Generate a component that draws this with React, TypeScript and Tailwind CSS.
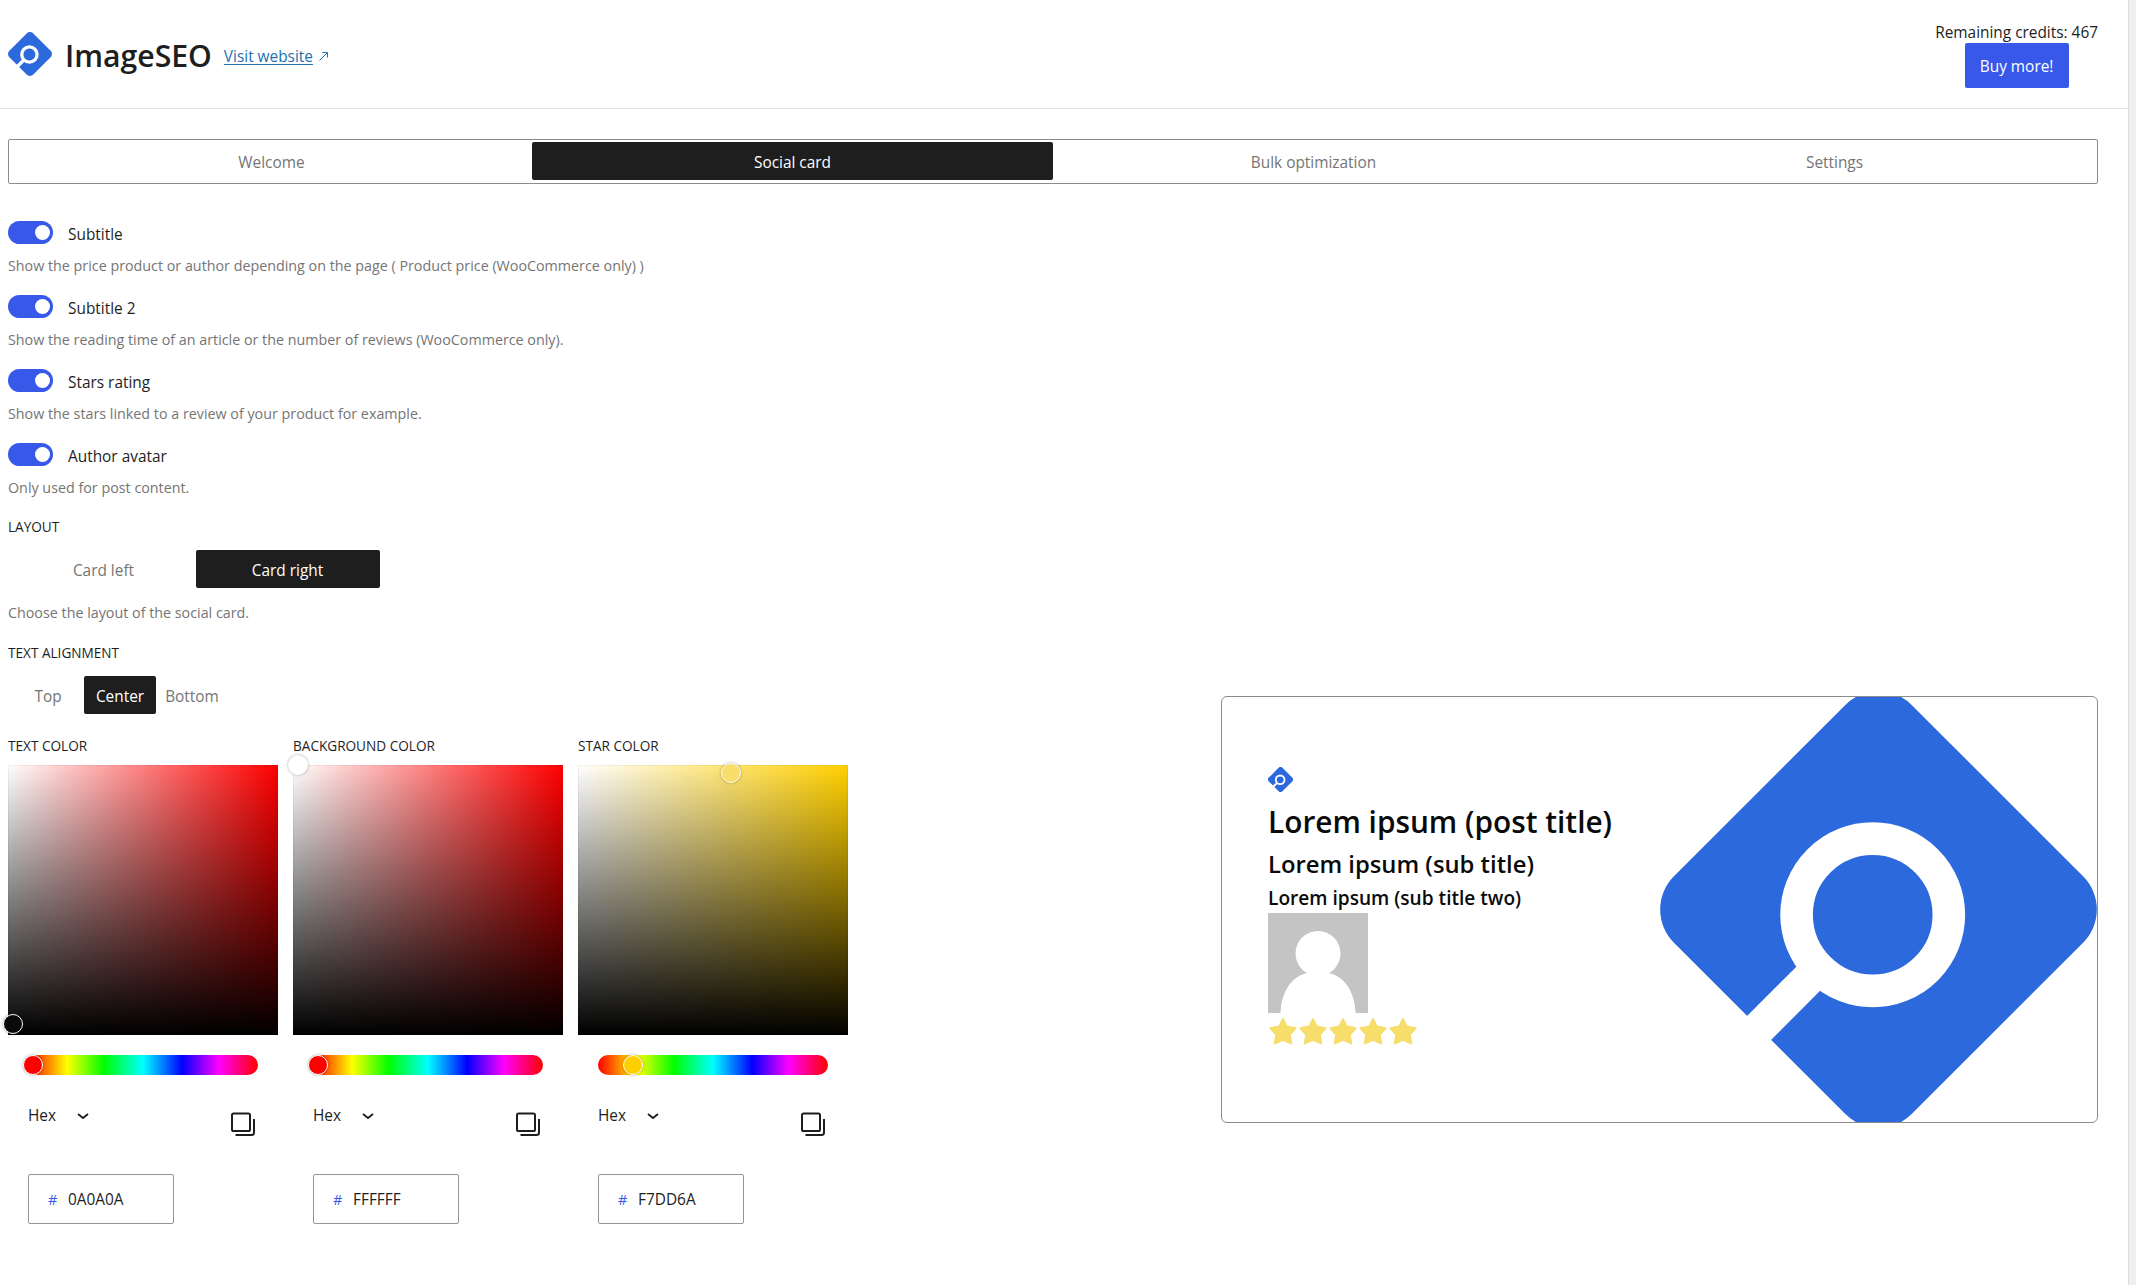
const BODY = "text-[15.4px] leading-6";

function Logo({ className }: { className: string }) {
  return (
    <svg className={className} viewBox="0 0 438 438" preserveAspectRatio="xMidYMid slice" aria-hidden="true">
      <rect x="50.5" y="50.5" width="337" height="337" rx="47" fill="#2b69dc" transform="rotate(45 219 219)" />
      <circle cx="213.2" cy="224.3" r="76.3" fill="none" stroke="#fff" strokeWidth="32.7" />
      <path d="M143 270 L78 335 L102 359 L167 294 Z" fill="#fff" />
    </svg>
  );
}

function Header() {
  return (
    <header className="flex h-[109px] items-start justify-between border-b border-[#e2e2e2] pr-[30px] pl-2">
      <div className="mt-8 flex h-11 items-center">
        <Logo className="size-11" />
        <h1 className="ml-[13px] pt-[3px] text-[30.2px] leading-10 font-semibold">ImageSEO</h1>
        <a href="#" className={`ml-3 flex items-center pt-[5px] text-[#2271b1] ${BODY}`}>
          <span className="underline decoration-1 underline-offset-2">Visit website</span>
          <svg className="ml-[6px] size-[9px]" viewBox="0 0 9 9" fill="none" stroke="currentColor" aria-hidden="true">
            <path d="M0.5 8.5 L8 1 M3.5 0.5 H8.5 V5.5" />
          </svg>
        </a>
      </div>
      <div className="mt-[21px] flex flex-col items-center">
        <span className={`-mb-[2px] ${BODY}`}>Remaining credits: 467</span>
        <button className={`h-[45px] w-[104px] rounded-[2px] bg-[#3858e9] pt-[2px] text-white ${BODY}`}>
          Buy more!
        </button>
      </div>
    </header>
  );
}

function Segment({ label, active, className }: { label: string; active?: boolean; className: string }) {
  return (
    <button
      className={`h-[38px] rounded-[2px] pt-[3px] ${BODY} ${className} ${
        active ? "bg-[#1e1e1e] text-white" : "text-[#757575]"
      }`}
    >
      {label}
    </button>
  );
}

function ToggleField({ label, help }: { label: string; help: string }) {
  return (
    <div className="h-[74px]">
      <div className="flex h-[26px] items-start gap-[15px]">
        <span className="flex h-[23px] w-[45px] items-center justify-end rounded-full bg-[#3858e9] pr-[3px]">
          <span className="size-[15px] rounded-full bg-white" />
        </span>
        <span className={`mt-[2px] ${BODY}`}>{label}</span>
      </div>
      <p className="mt-[9px] text-[14.3px] leading-5 text-[#757575]">{help}</p>
    </div>
  );
}

function Label({ children }: { children: string }) {
  return <div className="text-[13.6px] leading-5 uppercase">{children}</div>;
}

type Picker = { label: string; hue: string; hueX: number; color: string; x: number; y: number; hex: string };

const KNOB =
  "absolute size-5 -translate-x-1/2 -translate-y-1/2 rounded-full border border-white shadow-[0_0_3px_rgba(0,0,0,0.35)]";

function ColorPicker({ label, hue, hueX, color, x, y, hex }: Picker) {
  return (
    <div className="w-[270px]">
      <Label>{label}</Label>
      <div
        className="relative mt-[9px] h-[270px]"
        style={{ backgroundColor: hue }}
      >
        <div className="h-full bg-[linear-gradient(0deg,#000,transparent),linear-gradient(90deg,#fff,transparent)] shadow-[inset_0_0_0_1px_rgba(0,0,0,0.05)]" />
        <span className={KNOB} style={{ left: x, top: y, backgroundColor: color }} />
      </div>
      <div className="px-5">
        <div className="relative mt-5 h-5 rounded-full bg-[linear-gradient(90deg,#f00_0%,#ff0_17%,#0f0_33%,#0ff_50%,#00f_67%,#f0f_83%,#f00_100%)]">
          <span className={`top-1/2 ${KNOB}`} style={{ left: hueX, backgroundColor: hue }} />
        </div>
        <div className="mt-[29px] flex h-[70px] items-start justify-between">
          <div className="flex h-6 items-center">
            <span className={`w-[49px] ${BODY}`}>Hex</span>
            <svg className="h-[7px] w-[12px]" viewBox="0 0 12 7" fill="none" stroke="#1e1e1e" strokeWidth="1.8" aria-hidden="true">
              <path d="M1 1 L6 5 L11 1" />
            </svg>
          </div>
          <svg className="mt-2 mr-[3px] size-6" viewBox="0 0 24 24" fill="none" stroke="#1e1e1e" strokeWidth="2" aria-hidden="true">
            <rect x="1" y="1.4" width="18" height="17.6" rx="1.6" />
            <path d="M23 7 V20.5 a2.5 2.5 0 0 1 -2.5 2.5 H4.5" />
          </svg>
        </div>
        <div className={`flex h-[50px] w-[146px] items-center rounded-[2px] border border-[#949494] pt-[2px] pl-[19px] ${BODY}`}>
          <span className="w-5 text-[14.5px] text-[#3858e9]">#</span>
          <span>{hex}</span>
        </div>
      </div>
    </div>
  );
}

const PICKERS: Picker[] = [
  { label: "Text color", hue: "#ff0000", hueX: 5, color: "#0a0a0a", x: 5, y: 259, hex: "0A0A0A" },
  { label: "Background color", hue: "#ff0000", hueX: 5, color: "#ffffff", x: 5, y: 0, hex: "FFFFFF" },
  { label: "Star color", hue: "#ffd000", hueX: 35, color: "#f7dd6a", x: 153, y: 8, hex: "F7DD6A" },
];

function Star() {
  return (
    <svg className="size-[30px]" viewBox="0 0 30 30" aria-hidden="true">
      <path
        d="M15 3.2 L18.8 10.6 L27.6 12.3 L21.8 18.6 L23.2 27.4 L15 23.9 L6.8 27.4 L8.2 18.6 L2.4 12.3 L11.2 10.6 Z"
        fill="#f7dd6a"
        stroke="#f7dd6a"
        strokeWidth="2"
        strokeLinejoin="round"
      />
    </svg>
  );
}

function Preview() {
  return (
    <section className="mt-[512px] flex h-[427px] w-[877px] justify-between overflow-hidden rounded-[6px] border border-[#8c8c8c] text-[#0a0a0a]">
      <div className="pt-[70px] pl-[46px] font-semibold">
        <Logo className="size-[25px]" />
        <div className="mt-2 text-[29.8px] leading-[44px]">Lorem ipsum (post title)</div>
        <div className="mt-1 text-[23.8px] leading-8">Lorem ipsum (sub title)</div>
        <div className="mt-[5px] text-[19.1px] leading-[26px]">Lorem ipsum (sub title two)</div>
        <svg className="mt-[2px] size-[100px]" viewBox="0 0 100 100" aria-hidden="true">
          <rect width="100" height="100" fill="#c4c4c4" />
          <circle cx="50" cy="40.5" r="22.5" fill="#fff" />
          <path d="M12.5 100 C13 78 25 62 40 60 H60 C75 62 87 78 87.5 100 Z" fill="#fff" />
        </svg>
        <div className="mt-[3px] flex">
          {[1, 2, 3, 4, 5].map((n) => (
            <Star key={n} />
          ))}
        </div>
      </div>
      <Logo className="h-[425px] w-[437px]" />
    </section>
  );
}

export default function App() {
  return (
    <div className="flex h-[1285px] overflow-hidden bg-white font-['Open_Sans',sans-serif] text-[#1e1e1e]">
      <main className="w-[2128px]">
        <Header />
        <div className="mt-[30px] mr-[30px] ml-2">
          <nav className="grid h-[45px] grid-cols-4 rounded-[2px] border border-[#8c8c8c] p-[2px]">
            <Segment label="Welcome" className="w-full" />
            <Segment label="Social card" active className="w-full" />
            <Segment label="Bulk optimization" className="w-full" />
            <Segment label="Settings" className="w-full" />
          </nav>
          <div className="flex items-start justify-between">
            <div className="pt-[37px]">
              <ToggleField
                label="Subtitle"
                help="Show the price product or author depending on the page ( Product price (WooCommerce only) )"
              />
              <ToggleField
                label="Subtitle 2"
                help="Show the reading time of an article or the number of reviews (WooCommerce only)."
              />
              <ToggleField
                label="Stars rating"
                help="Show the stars linked to a review of your product for example."
              />
              <ToggleField label="Author avatar" help="Only used for post content." />
              <div>
                <Label>Layout</Label>
                <div className="mt-[13px] flex pl-[3.5px]">
                  <Segment label="Card left" className="w-[184px]" />
                  <Segment label="Card right" active className="w-[184px]" />
                </div>
                <p className="mt-[15px] text-[14.3px] leading-5 text-[#757575]">Choose the layout of the social card.</p>
              </div>
              <div className="mt-5">
                <Label>Text alignment</Label>
                <div className="mt-[13px] flex pl-1">
                  <Segment label="Top" className="w-[72px]" />
                  <Segment label="Center" active className="w-[72px]" />
                  <Segment label="Bottom" className="w-[72px]" />
                </div>
              </div>
              <div className="mt-[22px] flex gap-[15px]">
                {PICKERS.map((p) => (
                  <ColorPicker key={p.label} {...p} />
                ))}
              </div>
            </div>
            <Preview />
          </div>
        </div>
      </main>
      <div className="w-2 border-l border-[#dcdcdc] bg-[#f0f0f0]" />
    </div>
  );
}
